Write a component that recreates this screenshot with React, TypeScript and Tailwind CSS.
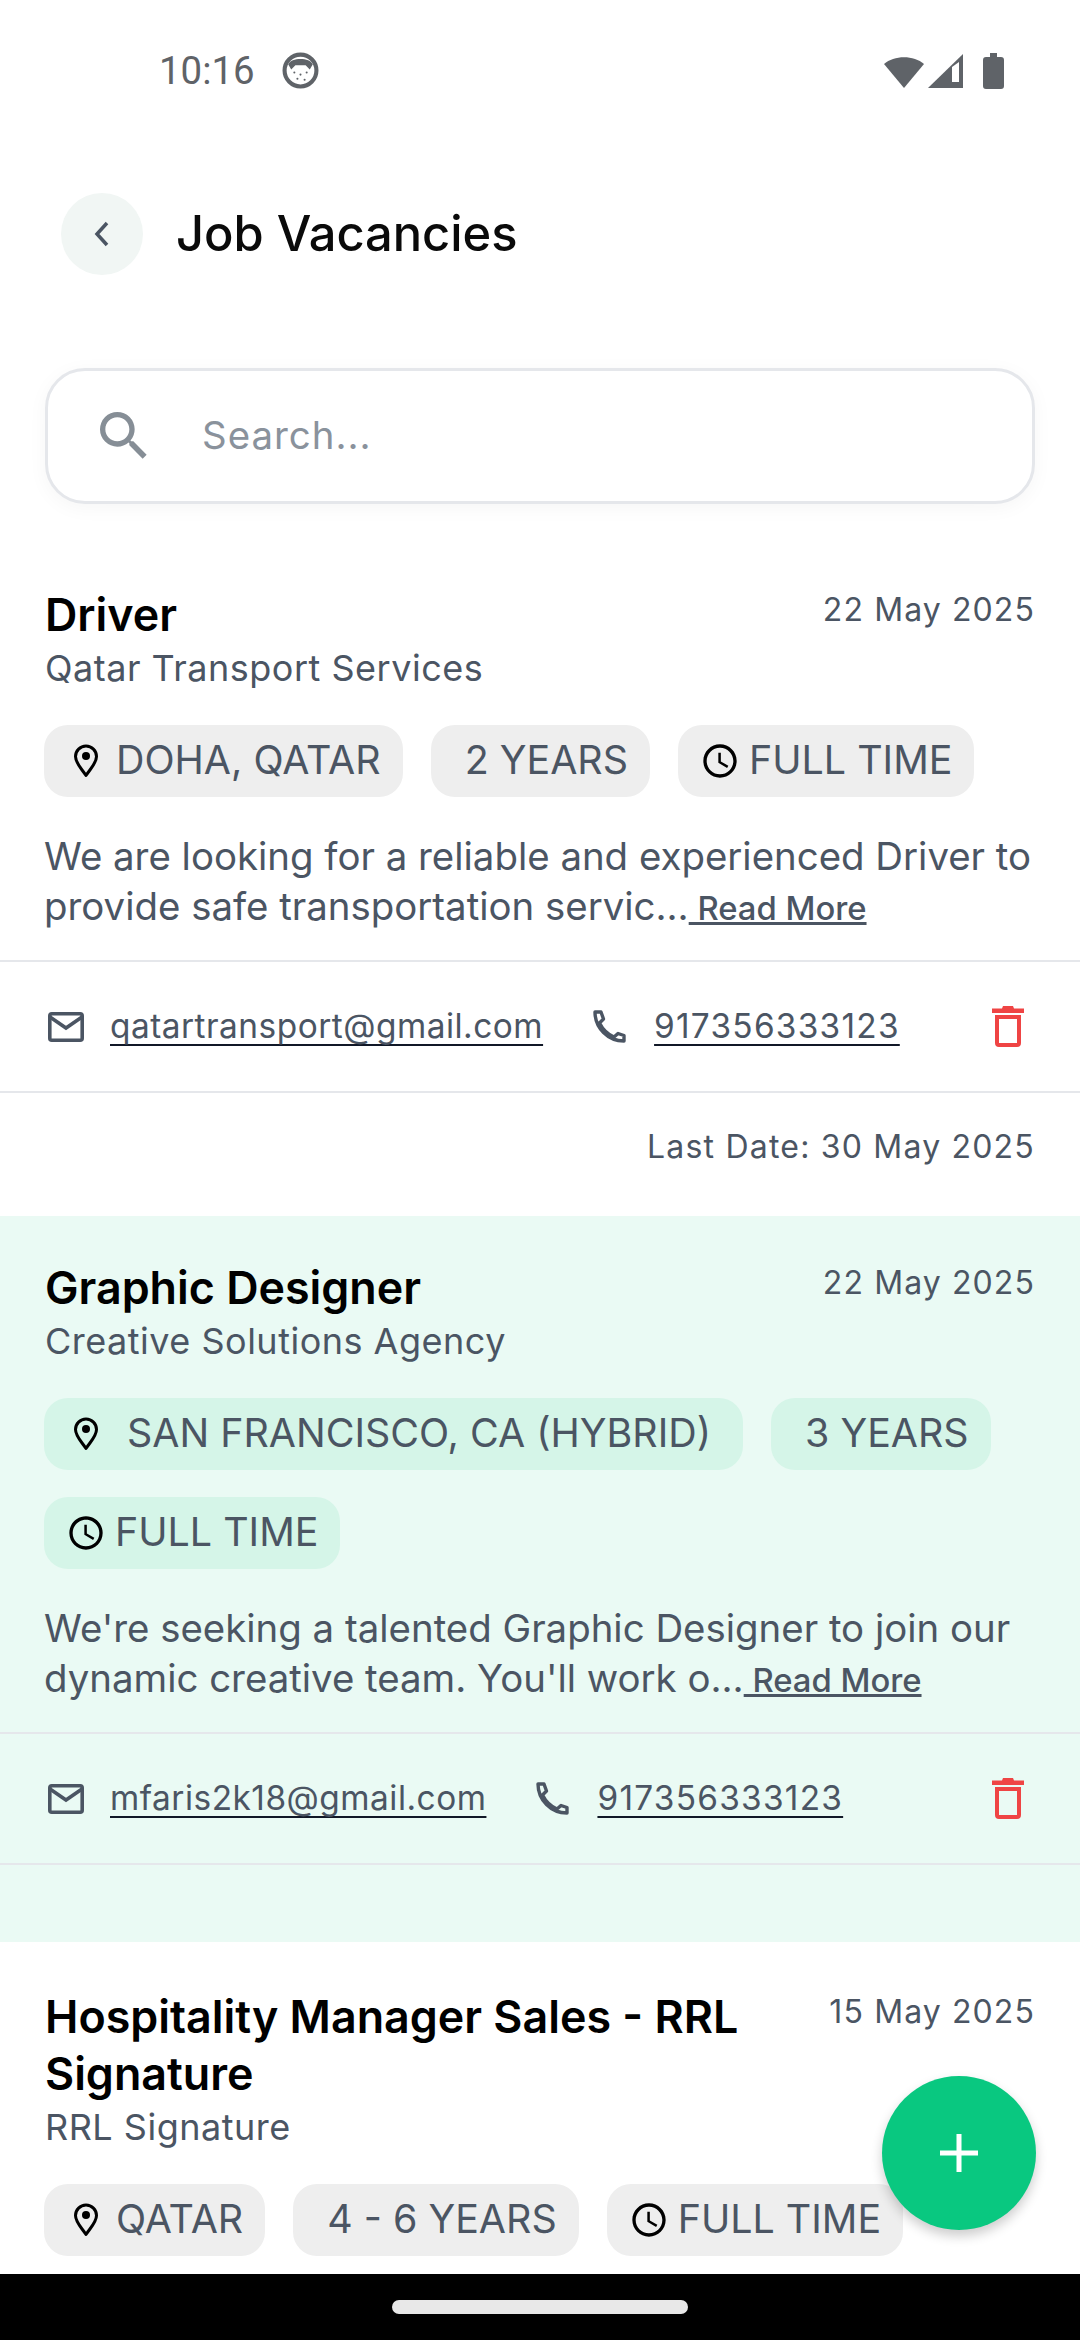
import { MdAccessTime, MdSearch } from "react-icons/md";

type Job = {
  title: string;
  company: string;
  posted: string;
  location: string;
  experience: string;
  summary?: string;
  email?: string;
  phone?: string;
  lastDate?: string;
  highlighted?: boolean;
};

const jobs: Job[] = [
  {
    title: "Driver",
    company: "Qatar Transport Services",
    posted: "22 May 2025",
    location: "DOHA, QATAR",
    experience: "2 YEARS",
    summary: "We are looking for a reliable and experienced Driver to provide safe transportation servic...",
    email: "qatartransport@gmail.com",
    phone: "917356333123",
    lastDate: "Last Date: 30 May 2025",
  },
  {
    title: "Graphic Designer",
    company: "Creative Solutions Agency",
    posted: "22 May 2025",
    location: "SAN FRANCISCO, CA (HYBRID)",
    experience: "3 YEARS",
    summary: "We're seeking a talented Graphic Designer to join our dynamic creative team. You'll work o...",
    email: "mfaris2k18@gmail.com",
    phone: "917356333123",
    highlighted: true,
  },
  {
    title: "Hospitality Manager Sales - RRL Signature",
    company: "RRL Signature",
    posted: "15 May 2025",
    location: "QATAR",
    experience: "4 - 6 YEARS",
  },
];

const StatusBar = () => (
  <div className="flex h-[142px] shrink-0 items-center justify-between pl-[159px] pr-[76px]">
    <div className="flex items-center gap-[27px]">
      <span className="text-[38.4px] text-[#5f6368] [font-family:Roboto,sans-serif]">10:16</span>
      <svg width="37" height="37" viewBox="0 0 36 36">
        <circle cx="18" cy="18" r="15.5" fill="#fff" stroke="#5f6368" strokeWidth="4" />
        <path d="M6 12C9 5 27 5 30 12L27 17 23 13H13L9 17Z" fill="#5f6368" />
        <g fill="#5f6368">
          <circle cx="12" cy="20" r="1" />
          <circle cx="18" cy="22" r="1" />
          <circle cx="24" cy="20" r="1" />
          <circle cx="15" cy="26" r="1" />
          <circle cx="22" cy="27" r="1" />
        </g>
      </svg>
    </div>
    <div className="flex items-center">
      <svg width="42" height="34" viewBox="0 0 42 34" fill="#5f6368">
        <path d="M1 10C11 1 31 1 41 10L21 34Z" />
      </svg>
      <svg className="ml-[3px]" width="35" height="34" viewBox="0 0 35 34">
        <path d="M0 34 35 0V34Z" fill="#5f6368" />
        <path d="M24 28V13L31 8V28Z" fill="#fff" />
      </svg>
      <svg className="ml-[20px]" width="21" height="36" viewBox="0 0 21 36" fill="#5f6368">
        <path d="M7 0H14V4H18Q21 4 21 7V33Q21 36 18 36H3Q0 36 0 33V7Q0 4 3 4H7Z" />
      </svg>
    </div>
  </div>
);

const Tag = ({ bg, icon, label, gap }: { bg: string; icon?: React.ReactNode; label: string; gap: string }) => (
  <span className={`flex h-[72px] items-center rounded-[24px] ${bg} ${gap} text-[39.4px] text-[#4b5563]`}>
    {icon}
    {label}
  </span>
);

const PinIcon = () => (
  <svg className="mx-[5px]" width="26" height="34" viewBox="0 0 26 34" fill="none">
    <path d="M13 31.500C8 24 2.500 19 2.500 12.500A10.500 10.500 0 0 1 23.500 12.500C23.500 19 18 24 13 31.500Z" stroke="#000" strokeWidth="3" strokeLinejoin="round" />
    <circle cx="13" cy="12" r="4" fill="#000" />
  </svg>
);

const MailIcon = () => (
  <svg width="36" height="30" viewBox="0 0 36 30" fill="none" stroke="#4b5563" strokeWidth="3.6">
    <rect x="1.8" y="1.8" width="32.4" height="26.4" rx="2" />
    <path d="M2 5 18 16 34 5" />
  </svg>
);

const PhoneIcon = () => (
  <svg width="33" height="33" viewBox="0 0 33 33" fill="none" stroke="#4b5563" strokeWidth="3.4" strokeLinejoin="round">
    <path d="M2 2H8L10.500 9 6.500 13C10 20 14 24 21 27L25 23.500 31 25.500V31C15 31 2 18 2 2Z" />
  </svg>
);

const TrashIcon = () => (
  <svg width="32" height="41" viewBox="0 0 32 41" fill="none">
    <path d="M0 2.500H10L11 0H21L22 2.500H32V7H0Z" fill="#ef4444" />
    <path d="M5 11V37Q5 39 7 39H25Q27 39 27 37V11Z" stroke="#ef4444" strokeWidth="4" />
  </svg>
);

const linkText =
  "text-[33.4px] text-[#4b5563] underline decoration-[#111827] decoration-[2px] underline-offset-[6px] [text-decoration-skip-ink:none]";

const JobCard = ({ job }: { job: Job }) => {
  const tagBg = job.highlighted ? "bg-[#d5f5e8]" : "bg-[#eeeeee]";
  return (
    <div className={`shrink-0 ${job.summary ? "pt-[44px]" : "pt-[47px]"} ${job.highlighted ? "bg-[#eafaf4]" : "bg-white"}`}>
      <div className="flex items-start justify-between gap-[60px] px-[45px]">
        <div className="min-w-0 flex-1">
          <div className="text-[44.8px] leading-[57px] font-semibold text-black">{job.title}</div>
          <div className="text-[36px] leading-[48px] tracking-[0.5px] text-[#4b5563]">{job.company}</div>
        </div>
        <div className="-mt-[1px] shrink-0 text-[32px] leading-[48px] tracking-[1.1px] text-[#4b5563]">{job.posted}</div>
      </div>
      <div className="mt-[33px] flex flex-wrap gap-x-[28px] gap-y-[27px] px-[44px]">
        <Tag
          bg={tagBg}
          gap={job.highlighted ? "pl-[24px] pr-[32px] gap-[23px]" : "pl-[24px] pr-[22px] gap-[12px]"}
          icon={<PinIcon />}
          label={job.location}
        />
        <Tag bg={tagBg} gap="pl-[34px] pr-[22px]" label={job.experience} />
        <Tag
          bg={tagBg}
          gap="pl-[22px] pr-[22px] gap-[9px]"
          icon={<MdAccessTime size={40} className="text-black" />}
          label="FULL TIME"
        />
      </div>
      {job.summary && (
        <>
          <p className="mt-[34px] px-[44px] text-[38.4px] leading-[50px] text-[#4b5563]">
            {job.summary}
            <span className="text-[32.8px] font-medium underline"> Read More</span>
          </p>
          <div className="mt-[27px] flex h-[133px] items-center border-y-[2px] border-[#e5e7eb] pl-[48px] pr-[56px]">
            <MailIcon />
            <span className={`ml-[26px] tracking-[0.5px] ${linkText}`}>{job.email}</span>
            <span className="ml-[50px] flex items-center">
              <PhoneIcon />
            </span>
            <span className={`ml-[28px] tracking-[1.25px] ${linkText}`}>{job.phone}</span>
            <span className="ml-auto flex">
              <TrashIcon />
            </span>
          </div>
          {job.lastDate ? (
            <div className="flex h-[123px] justify-end px-[45px] pt-[30px] text-[32px] leading-[48px] tracking-[1.2px] text-[#4b5563]">
              {job.lastDate}
            </div>
          ) : (
            <div className="h-[77px]" />
          )}
        </>
      )}
    </div>
  );
};

const App = () => (
  <div className="relative flex h-[2340px] w-[1080px] flex-col overflow-hidden bg-white [font-family:Inter,sans-serif]">
    <StatusBar />
    <div className="flex h-[184px] shrink-0 items-center pl-[61px]">
      <span className="flex h-[82px] w-[82px] items-center justify-center rounded-full bg-[#f1f6f4]">
        <svg width="18" height="28" viewBox="0 0 18 28" fill="none" stroke="#4b5563" strokeWidth="3.5">
          <path d="M14 3 4 14 14 25" />
        </svg>
      </span>
      <h1 className="ml-[33px] text-[48.8px] font-medium text-[#0a0a0a]">Job Vacancies</h1>
    </div>
    <div className="mx-[45px] mt-[42px] flex h-[136px] shrink-0 items-center rounded-[40px] border-[3px] border-[#e5e7eb] bg-white pl-[44px] shadow-[0_4px_20px_rgba(0,0,0,0.04)]">
      <MdSearch size={64} className="text-[#868e96]" />
      <span className="ml-[46px] text-[38.4px] tracking-[1px] text-[#8a929c]">Search...</span>
    </div>
    <div className="mt-[39px] flex min-h-0 flex-1 flex-col overflow-hidden">
      {jobs.map((job) => (
        <JobCard key={job.title} job={job} />
      ))}
    </div>
    <button className="absolute left-[882px] top-[2076px] flex h-[154px] w-[154px] items-center justify-center rounded-full bg-[#09c880] shadow-[0_6px_12px_rgba(0,0,0,0.2)]">
      <svg width="38" height="38" viewBox="0 0 38 38" fill="#fff">
        <path d="M16.500 0H21.500V16.500H38V21.500H21.500V38H16.500V21.500H0V16.500H16.500Z" />
      </svg>
    </button>
    <div className="absolute bottom-0 left-0 flex h-[66px] w-full items-center justify-center bg-black">
      <span className="h-[14px] w-[296px] rounded-full bg-[#e8e8e8]" />
    </div>
  </div>
);

export default App;
